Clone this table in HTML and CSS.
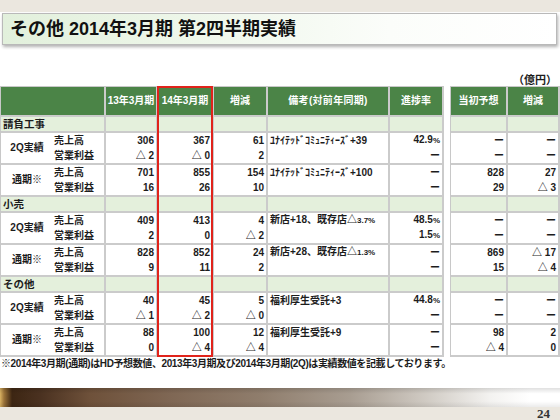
FILE: index.html
```html
<!DOCTYPE html>
<html lang="ja">
<head>
<meta charset="utf-8">
<title>その他 2014年3月期 第2四半期実績</title>
<link rel="stylesheet" href="styles.css">
</head>
<body>
<div class="slide">
  <div class="topband"></div>
  <div class="title"><h1>その他 2014年3月期 第2四半期実績</h1></div>
  <div class="unit">（億円）</div>
  <div class="tables">
    <table class="tbl main">
      <colgroup><col class="cA"><col class="cB"><col class="c13"><col class="c14"><col class="cd"><col class="cn"><col class="cp"></colgroup>
      <thead>
        <tr><th colspan="2"></th><th>13年3月期</th><th>14年3月期</th><th>増減</th><th class="bk">備考(対前年同期)</th><th>進捗率</th></tr>
      </thead>
      <tbody>
        <tr class="sec"><td colspan="2" class="sl">請負工事</td><td></td><td></td><td></td><td></td><td></td></tr>
        <tr class="r1"><td class="lbl" rowspan="2">2Q実績</td><td class="sub">売上高</td><td class="n">306</td><td class="n">367</td><td class="n">61</td><td class="t">ﾕﾅｲﾃｯﾄﾞｺﾐｭﾆﾃｨｰｽﾞ+39</td><td class="n">42.9<span class="pc">%</span></td></tr>
        <tr class="r2"><td class="sub">営業利益</td><td class="n">△ 2</td><td class="n">△ 0</td><td class="n">2</td><td class="t"></td><td class="n"><span class="ds">ー</span></td></tr>
        <tr class="r1"><td class="lbl" rowspan="2">通期※</td><td class="sub">売上高</td><td class="n">701</td><td class="n">855</td><td class="n">154</td><td class="t">ﾕﾅｲﾃｯﾄﾞｺﾐｭﾆﾃｨｰｽﾞ+100</td><td class="n"><span class="ds">ー</span></td></tr>
        <tr class="r2"><td class="sub">営業利益</td><td class="n">16</td><td class="n">26</td><td class="n">10</td><td class="t"></td><td class="n"><span class="ds">ー</span></td></tr>

        <tr class="sec"><td colspan="2" class="sl">小売</td><td></td><td></td><td></td><td></td><td></td></tr>
        <tr class="r1"><td class="lbl" rowspan="2">2Q実績</td><td class="sub">売上高</td><td class="n">409</td><td class="n">413</td><td class="n">4</td><td class="t">新店+18、既存店△<span class="sm">3.7%</span></td><td class="n">48.5<span class="pc">%</span></td></tr>
        <tr class="r2"><td class="sub">営業利益</td><td class="n">2</td><td class="n">0</td><td class="n">△ 2</td><td class="t"></td><td class="n">1.5<span class="pc">%</span></td></tr>
        <tr class="r1"><td class="lbl" rowspan="2">通期※</td><td class="sub">売上高</td><td class="n">828</td><td class="n">852</td><td class="n">24</td><td class="t">新店+28、既存店△<span class="sm">1.3%</span></td><td class="n"><span class="ds">ー</span></td></tr>
        <tr class="r2"><td class="sub">営業利益</td><td class="n">9</td><td class="n">11</td><td class="n">2</td><td class="t"></td><td class="n"><span class="ds">ー</span></td></tr>

        <tr class="sec"><td colspan="2" class="sl">その他</td><td></td><td></td><td></td><td></td><td></td></tr>
        <tr class="r1"><td class="lbl" rowspan="2">2Q実績</td><td class="sub">売上高</td><td class="n">40</td><td class="n">45</td><td class="n">5</td><td class="t">福利厚生受託+3</td><td class="n">44.8<span class="pc">%</span></td></tr>
        <tr class="r2"><td class="sub">営業利益</td><td class="n">△ 1</td><td class="n">△ 2</td><td class="n">△ 0</td><td class="t"></td><td class="n"><span class="ds">ー</span></td></tr>
        <tr class="r1"><td class="lbl" rowspan="2">通期※</td><td class="sub">売上高</td><td class="n">88</td><td class="n">100</td><td class="n">12</td><td class="t">福利厚生受託+9</td><td class="n"><span class="ds">ー</span></td></tr>
        <tr class="r2"><td class="sub">営業利益</td><td class="n">0</td><td class="n">△ 4</td><td class="n">△ 4</td><td class="t"></td><td class="n"><span class="ds">ー</span></td></tr>
      </tbody>
    </table>

    <table class="tbl side">
      <colgroup><col class="cs1"><col class="cs2"></colgroup>
      <thead>
        <tr><th>当初予想</th><th>増減</th></tr>
      </thead>
      <tbody>
        <tr class="sec"><td></td><td></td></tr>
        <tr class="r1"><td class="n"><span class="ds">ー</span></td><td class="n"><span class="ds">ー</span></td></tr>
        <tr class="r2"><td class="n"><span class="ds">ー</span></td><td class="n"><span class="ds">ー</span></td></tr>
        <tr class="r1"><td class="n">828</td><td class="n">27</td></tr>
        <tr class="r2"><td class="n">29</td><td class="n">△ 3</td></tr>
        <tr class="sec"><td></td><td></td></tr>
        <tr class="r1"><td class="n"><span class="ds">ー</span></td><td class="n"><span class="ds">ー</span></td></tr>
        <tr class="r2"><td class="n"><span class="ds">ー</span></td><td class="n"><span class="ds">ー</span></td></tr>
        <tr class="r1"><td class="n">869</td><td class="n">△ 17</td></tr>
        <tr class="r2"><td class="n">15</td><td class="n">△ 4</td></tr>
        <tr class="sec"><td></td><td></td></tr>
        <tr class="r1"><td class="n"><span class="ds">ー</span></td><td class="n"><span class="ds">ー</span></td></tr>
        <tr class="r2"><td class="n"><span class="ds">ー</span></td><td class="n"><span class="ds">ー</span></td></tr>
        <tr class="r1"><td class="n">98</td><td class="n">2</td></tr>
        <tr class="r2"><td class="n">△ 4</td><td class="n">0</td></tr>
      </tbody>
    </table>

    <div class="hilite"></div>
  </div>
  <p class="note">※2014年3月期(通期)はHD予想数値、2013年3月期及び2014年3月期(2Q)は実績数値を記載しております。</p>
  <div class="spacer"></div>
  <div class="bar"></div>
  <div class="footer">24</div>
</div>
</body>
</html>
```

FILE: styles.css
```css
* {
  box-sizing: border-box;
  margin: 0;
  padding: 0;
}

html, body {
  margin: 0;
  width: 560px;
  height: 420px;
  overflow: hidden;
  background: #ffffff;
}

body {
  font-family: "Liberation Sans", "Noto Sans CJK JP", sans-serif;
  font-weight: bold;
  color: #1c1c1c;
}

.slide {
  position: relative;
  width: 560px;
  height: 420px;
  display: flex;
  flex-direction: column;
}

.topband {
  height: 12px;
  flex: none;
  background: #ebe7df;
}

.title {
  flex: none;
  margin: 1px 3px 0 2px;
  height: 32px;
  border: 1px solid #b9b9b9;
  background: linear-gradient(90deg, #e2f0dc 0%, #eef7ea 35%, #fbfdfa 70%, #ffffff 100%);
  box-shadow: 1px 2px 3px rgba(0, 0, 0, 0.3);
  display: flex;
  align-items: center;
  padding-left: 7px;
}

.title h1 {
  font-size: 18px;
  line-height: 20px;
  font-weight: bold;
  color: #111;
}

.unit {
  flex: none;
  margin-top: 29px;
  height: 12px;
  line-height: 12px;
  font-size: 11px;
  text-align: right;
  padding-right: 3px;
}

.tables {
  flex: none;
  position: relative;
  display: flex;
  align-items: flex-start;
  gap: 6px;
}

.tbl {
  border-collapse: separate;
  border-spacing: 0;
  table-layout: fixed;
  border-top: 1px solid #c8c8c8;
  border-left: 1px solid #c8c8c8;
}

.main { width: 444px; }
.side { width: 110px; }

.cA { width: 52px; }
.cB { width: 53px; }
.c13 { width: 52px; }
.c14 { width: 56px; }
.cd { width: 54px; }
.cn { width: 122px; }
.cp { width: 54px; }
.cs1 { width: 57px; }
.cs2 { width: 52px; }

.tbl th,
.tbl td {
  box-sizing: border-box;
  padding: 0;
  border-right: 2px solid #cbcbcb;
  font-size: 10px;
  line-height: 12px;
  vertical-align: middle;
  white-space: nowrap;
  overflow: hidden;
}

.tbl th {
  height: 30px;
  background: #4b8447;
  color: #ffffff;
  text-align: center;
  border-bottom: 2px solid #cbcbcb;
}

.tbl th.bk { letter-spacing: 0.3px; }

.tbl tr.sec td {
  height: 16px;
  background: #e4f0dc;
  border-bottom: 2px solid #cbcbcb;
}

.tbl td.sl {
  font-size: 10.5px;
  padding-left: 2px;
}

.tbl tr.r1 td { height: 15px; }

.tbl tr.r2 td {
  height: 17px;
  border-bottom: 2px solid #cbcbcb;
}

.tbl td.lbl {
  border-right: none;
  border-bottom: 2px solid #cbcbcb;
  text-align: center;
}

.tbl td.sub { padding-left: 1px; }

.tbl td.n {
  text-align: right;
  padding-right: 2px;
}

.tbl td.t {
  text-align: left;
  padding-left: 2px;
}

.pc { font-size: 8px; }
.sm { font-size: 8px; }
.ds {
  font-family: "Noto Sans CJK JP", sans-serif;
  font-size: 10px;
}

.hilite {
  position: absolute;
  left: 157px;
  top: 0;
  width: 56px;
  height: 271px;
  border: 2px solid #e0231b;
  pointer-events: none;
}

.note {
  flex: none;
  margin-top: 1px;
  padding-left: 1px;
  height: 12px;
  line-height: 12px;
  font-size: 10px;
  letter-spacing: -0.4px;
  white-space: nowrap;
}

.spacer { flex: 1; }

.bar {
  flex: none;
  height: 19px;
  background:
    linear-gradient(180deg, rgba(0, 0, 0, 0.12) 0%, rgba(0, 0, 0, 0) 30%, rgba(0, 0, 0, 0) 70%, rgba(0, 0, 0, 0.08) 100%),
    linear-gradient(90deg, #d9b262 0px, #9a7238 4px, #3d2613 12px, #4a3120 40px, #6e513a 90px, #7f6754 170px, #8f7d6c 260px, #a89d91 350px, #d2cdc6 430px, #f3f2f0 490px, #ffffff 530px);
}

.footer {
  flex: none;
  height: 13px;
  background: #ebe7df;
  text-align: right;
  padding-right: 10px;
  font-family: "Liberation Serif", serif;
  font-size: 13px;
  line-height: 13px;
  color: #333;
}
```
